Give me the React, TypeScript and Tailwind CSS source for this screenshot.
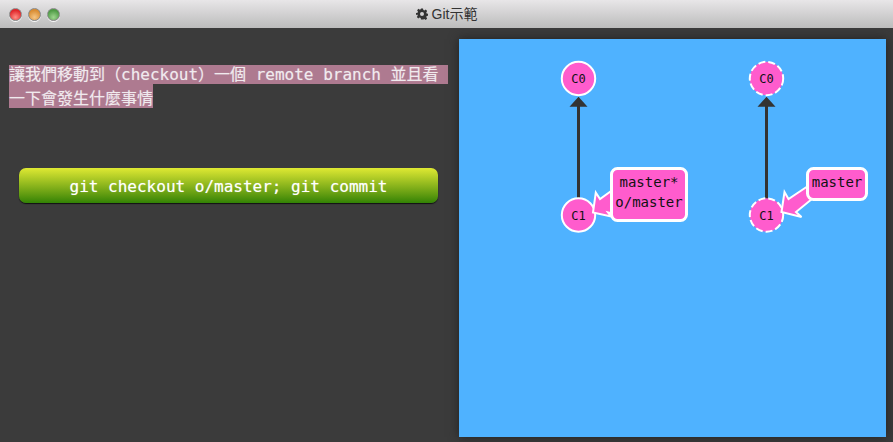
const svgText = "font-['DejaVu_Sans_Mono',monospace] fill-[#111]";

function Node({ cx, cy, label, dashed }: { cx: number; cy: number; label: string; dashed?: boolean }) {
  return (
    <g>
      <circle cx={cx} cy={cy} r={16.7} fill="#ff5ccd" stroke="#fff" strokeWidth={2} strokeDasharray={dashed ? "7 3" : undefined} />
      <text x={cx} y={cy + 4.5} textAnchor="middle" fontSize={12} className={svgText}>{label}</text>
    </g>
  );
}

function Edge({ x }: { x: number }) {
  return (
    <g>
      <line x1={x} y1={66} x2={x} y2={160} stroke="#333" strokeWidth={3} />
      <polygon points={`${x},57.7 ${x + 9},67.7 ${x - 9},67.7`} fill="#333" />
    </g>
  );
}

function Graph() {
  return (
    <svg width="427" height="398" viewBox="0 0 427 398" className="block">
      <Edge x={119.5} />
      <Edge x={307.5} />
      <Node cx={119.5} cy={39.5} label="C0" />
      <Node cx={119.5} cy={176} label="C1" />
      <Node cx={307.5} cy={39.5} label="C0" dashed />
      <Node cx={307.5} cy={176} label="C1" dashed />

      <polygon points="134,173.5 136.8,153.5 141,160 155,150 155,175 149,173.5 152,177.5" fill="#ff5ccd" stroke="#fff" strokeWidth={2} />
      <rect x={152.5} y={129.5} width={75} height={52} rx={6} fill="#ff5ccd" stroke="#fff" strokeWidth={3} />
      <text x={190} y={148} textAnchor="middle" fontSize={14} className={svgText}>master*</text>
      <text x={190} y={168} textAnchor="middle" fontSize={14} className={svgText}>o/master</text>

      <polygon points="322.5,173 325.5,153 329.5,160 349,147 353,160 337,173 342.5,178" fill="#ff5ccd" stroke="#fff" strokeWidth={2} />
      <rect x={348.5} y={129.5} width={59} height={31} rx={6} fill="#ff5ccd" stroke="#fff" strokeWidth={3} />
      <text x={378} y={148} textAnchor="middle" fontSize={14} className={svgText}>master</text>
    </svg>
  );
}

const lightBase = "w-[13px] h-[13px] rounded-full shadow-[0_1px_0_rgba(255,255,255,0.9)] border border-[#8a8a8a]";

export default function App() {
  return (
    <div className="w-[893px] h-[442px] overflow-hidden flex flex-col bg-[#3b3b3b]">
      <header className="h-[28px] shrink-0 relative flex items-center justify-center bg-gradient-to-b from-[#e8e6e8] to-[#bcbcbc]">
        <div className="absolute left-[9px] top-[8px] flex gap-[6px]">
          <span className={`${lightBase} bg-[radial-gradient(circle_at_50%_75%,#ff8f85,#e0262a_70%)]`} />
          <span className={`${lightBase} bg-[radial-gradient(circle_at_50%_75%,#f5c583,#d98d33_70%)]`} />
          <span className={`${lightBase} bg-[radial-gradient(circle_at_50%_75%,#9fd58f,#4f9b45_70%)]`} />
        </div>
        <div className="flex items-center gap-[4px] text-[14px] text-[#333] font-['Liberation_Sans','Noto_Sans_CJK_TC',sans-serif]">
          <svg width="12" height="12" viewBox="0 0 24 24" fill="#333">
            <path fillRule="evenodd" d="M10 1h4l.7 3.2 2 .8 2.8-1.8 2.8 2.8-1.8 2.8.8 2 3.2.7v4l-3.2.7-.8 2 1.8 2.8-2.8 2.8-2.8-1.8-2 .8L14 23h-4l-.7-3.2-2-.8-2.8 1.8-2.8-2.8 1.8-2.8-.8-2L0 14v-4l3.2-.7.8-2L2.2 4.5 5 1.7l2.8 1.8 1.5-.8zM12 8a4 4 0 100 8 4 4 0 000-8z" />
          </svg>
          <span>Git示範</span>
        </div>
      </header>
      <main className="flex-1 flex min-h-0">
        <section className="w-[459px] shrink-0 pl-[9px] pr-[10px] pt-[35px]">
          <p className="text-[16px] leading-[24px] text-[#f0eaee] h-[105px] [text-shadow:0_0_1px_rgba(255,255,255,0.4)] font-['DejaVu_Sans_Mono','Noto_Sans_CJK_TC',monospace]">
            <span className="bg-[#ae7a90]">讓我們移動到（checkout）一個 remote branch 並且看&nbsp;</span>
            <br />
            <span className="bg-[#ae7a90] pt-[5px]">一下會發生什麼事情</span>
          </p>
          <button className="ml-[10px] w-[419px] h-[35px] pt-[2px] rounded-[7px] text-white text-[16px] bg-gradient-to-b from-[#dfe933] to-[#318305] shadow-[0_1px_1px_#111] [text-shadow:0_0_1px_rgba(255,255,255,0.5)] font-['DejaVu_Sans_Mono',monospace]">
            git checkout o/master; git commit
          </button>
        </section>
        <section className="w-[427px] h-[398px] mt-[11px] bg-[#4fb2ff] shadow-[0_0_10px_#222] shrink-0">
          <Graph />
        </section>
      </main>
    </div>
  );
}
